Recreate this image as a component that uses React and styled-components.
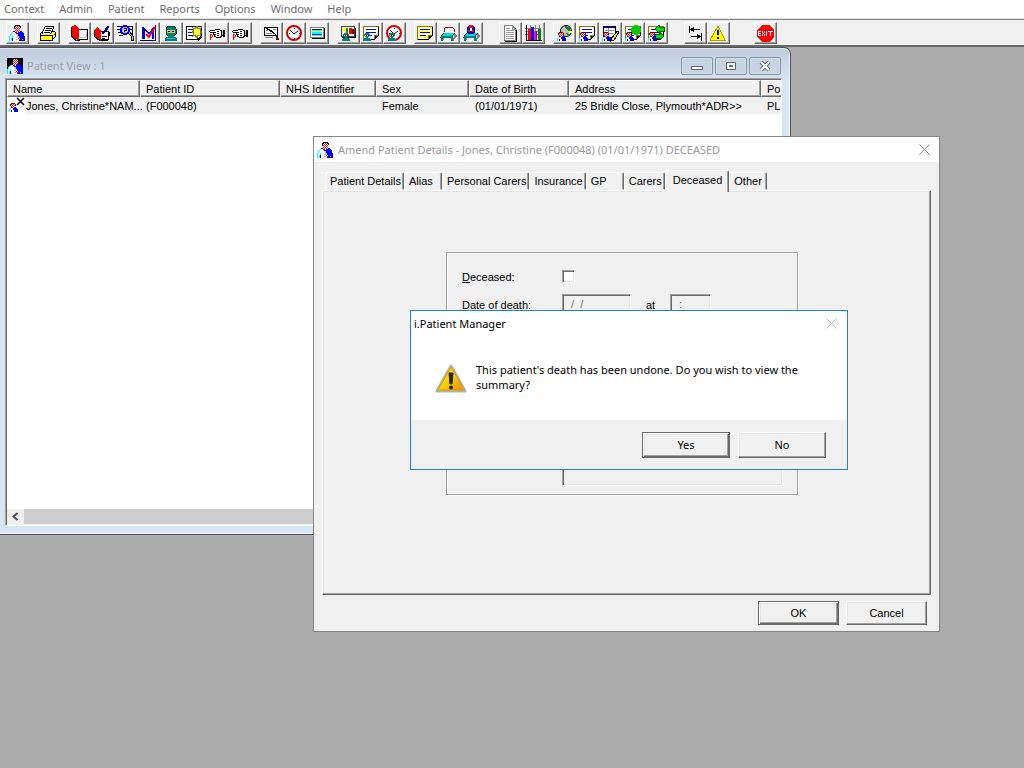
import React from 'react';
import styled, { createGlobalStyle, css } from 'styled-components';

const GlobalStyle = createGlobalStyle`
  * {
    box-sizing: border-box;
  }
  body {
    margin: 0;
    background: #ababab;
    color: #000;
    font: 11px/14px 'Liberation Sans', Arial, sans-serif;
  }
  button, input, textarea {
    font: inherit;
    color: inherit;
    margin: 0;
    border-radius: 0;
  }
`;

const uiFont = css`
  font-family: 'Noto Sans', 'Open Sans', sans-serif;
  font-size: 11px;
  line-height: 15px;
`;

const Screen = styled.div`
  min-height: 100vh;
  display: flex;
  flex-direction: column;
  overflow: hidden;
`;

const MenuBar = styled.nav`
  ${uiFont}
  display: flex;
  gap: 15px;
  height: 18px;
  padding: 0 4px 1px;
  background: #fff;
`;

const MenuItem = styled.button`
  border: 0;
  padding: 0;
  background: none;
  color: #6d6d6d;
`;

const Toolbar = styled.div`
  display: flex;
  height: 29px;
  padding: 3px 6px 0;
  background: #f0f0f0;
  border-top: 1px solid #e3e3e3;
  border-bottom: 2px solid #696969;
  box-shadow: inset 0 1px #808080;
`;

const ToolGroup = styled.div`
  display: flex;
  margin-right: ${(p) => p.$gap || 8}px;
`;

const ToolButton = styled.button`
  width: 23px;
  height: 22px;
  padding: 2px;
  background: #f0f0f0;
  border: 1px solid;
  border-color: #fff #696969 #696969 #fff;
  box-shadow: inset -1px -1px #a0a0a0;

  svg {
    display: block;
  }
`;

const Desktop = styled.main`
  position: relative;
  flex: 1;
`;

const ChildWindow = styled.section`
  position: absolute;
  left: 0;
  top: 0;
  width: 791px;
  padding: 7px 8px 8px 5px;
  background: linear-gradient(#bfcbda, #d7e4f2 32px);
  border: 1px solid #4e5257;
  border-left: 0;
  border-radius: 0 7px 0 0;
  box-shadow: inset 0 1px #e5edf5, inset -1px -1px #f0f6fc;
`;

const ChildTitleBar = styled.header`
  ${uiFont}
  display: flex;
  align-items: center;
  height: 23px;
  padding: 0 1px 2px 2px;
  color: #98a0aa;
`;

const ChildTitle = styled.h1`
  flex: 1;
  margin: 0 0 0 4px;
  font-size: 11px;
  font-weight: 400;
`;

const TitleIcon = styled.span`
  display: block;
  flex: none;
  width: 16px;
  height: 16px;
  background: ${(p) => (p.$dark ? '#000' : 'none')};

  svg {
    display: block;
  }
`;

const CaptionButton = styled.button`
  display: grid;
  place-items: center;
  width: 32px;
  height: 18px;
  margin-left: 2px;
  padding: 0;
  background: #c6d3e2;
  border: 1px solid #8593a7;
  border-radius: 2px;
  box-shadow: inset 0 0 0 1px #d5dfea;
`;

const ListFrame = styled.div`
  background: #fff;
  border: 1px solid;
  border-color: #a0a0a0 #fff #fff #a0a0a0;
  box-shadow: inset 1px 1px #696969;
  padding: 1px 0 0 1px;
`;

const ListBody = styled.div`
  height: 429px;
  overflow: hidden;
`;

const PatientTable = styled.table`
  width: 100%;
  table-layout: fixed;
  border-collapse: separate;
  border-spacing: 0;

  th, td {
    height: 17px;
    padding: 0 0 0 6px;
    text-align: left;
    font-weight: 400;
    white-space: nowrap;
    background: #f0f0f0;
  }
  th {
    border: 1px solid;
    border-color: #fff #696969 #696969 #fff;
    box-shadow: inset -1px -1px #a0a0a0;
    padding-left: 5px;
  }
  th:last-child {
    border-right: 0;
    box-shadow: inset 0 -1px #a0a0a0;
  }
  td:first-child {
    padding: 0;
  }
`;

const Col = styled.col`
  width: ${(p) => (p.$w ? `${p.$w}px` : 'auto')};
`;

const NameCell = styled.span`
  display: flex;
  align-items: center;
  background: linear-gradient(90deg, #fff 18px, #f0f0f0 18px);
  padding-left: 2px;

  svg {
    flex: none;
  }
`;

const ScrollBar = styled.div`
  display: flex;
  height: 16px;
  background: #cdcdcd;
  border-bottom: 1px solid #f0f0f0;
`;

const ScrollArrow = styled.button`
  width: 17px;
  padding: 0 0 0 4px;
  border: 0;
  background: #f0f0f0;

  svg {
    display: block;
  }
`;

const AmendDialog = styled.section`
  position: absolute;
  left: 313px;
  top: 89px;
  width: 627px;
  background: #f0f0f0;
  border: 1px solid #848484;
`;

const DialogTitleBar = styled.header`
  ${uiFont}
  display: flex;
  align-items: center;
  height: 25px;
  padding: 0 9px 0 3px;
  background: #fff;
  color: #999;
`;

const DialogTitle = styled.h2`
  flex: 1;
  margin: 0 0 0 5px;
  font-size: 11px;
  font-weight: 400;
`;

const CloseButton = styled.button`
  padding: 0;
  border: 0;
  background: none;
  color: ${(p) => p.$color};

  svg {
    display: block;
  }
`;

const TabArea = styled.div`
  padding: 9px 8px 0;
`;

const TabList = styled.div`
  display: flex;
  align-items: flex-end;
  height: 19px;
  padding-left: 3px;
`;

const Tab = styled.button`
  position: relative;
  min-width: 38px;
  height: 18px;
  padding: 0 2px 0 4px;
  text-align: left;
  white-space: nowrap;
  background: #f0f0f0;
  border: 1px solid;
  border-color: #fff #696969 transparent #fff;
  border-radius: 2px 2px 0 0;
  box-shadow: inset -1px 0 #a0a0a0;
  ${(p) =>
    p.$active &&
    css`
      z-index: 1;
      height: 22px;
      margin-bottom: -2px;
      padding: 0 6px 4px 7px;
      border-bottom: 0;
    `}
`;

const TabPage = styled.div`
  padding: 61px 132px 99px 123px;
  border: 1px solid;
  border-color: #fff #696969 #696969 #fff;
  box-shadow: inset -1px -1px #a0a0a0, inset 1px 1px #e3e3e3;
`;

const GroupBox = styled.div`
  padding: 15px 14px 8px 15px;
  border: 1px solid #a0a0a0;
  box-shadow: inset 1px 1px #fff, 1px 1px #fff;
`;

const FieldGrid = styled.div`
  display: grid;
  grid-template-columns: 100px 1fr;
  row-gap: 10px;
  align-items: center;

  label {
    padding-top: 2px;
  }
`;

const FieldRow = styled.div`
  display: flex;
  align-items: center;
`;

const sunken = css`
  border: 1px solid;
  border-color: #a0a0a0 #fff #fff #a0a0a0;
  box-shadow: inset 1px 1px #696969, inset -1px -1px #e3e3e3;
`;

const CheckBox = styled.input`
  appearance: none;
  width: 13px;
  height: 13px;
  background: #fff;
  ${sunken}
`;

const MaskedInput = styled.input`
  width: ${(p) => p.$w}px;
  height: 20px;
  padding: 0 8px;
  background: #f0f0f0;
  color: #6d6d6d;
  ${sunken}
`;

const AtLabel = styled.label`
  width: 39px;
  text-align: center;
`;

const Notes = styled.textarea`
  grid-column: 2;
  display: block;
  width: 100%;
  height: 162px;
  resize: none;
  background: #f0f0f0;
  ${sunken}
`;

const ButtonRow = styled.footer`
  display: flex;
  justify-content: flex-end;
  gap: ${(p) => p.$gap}px;
  padding: ${(p) => p.$pad};
`;

const PushButton = styled.button`
  width: ${(p) => p.$w}px;
  height: ${(p) => p.$h}px;
  padding: 0 0 1px;
  background: #f0f0f0;
  border: 1px solid;
  border-color: #fff #696969 #696969 #fff;
  box-shadow: inset -1px -1px #a0a0a0, inset 1px 1px #e3e3e3;
  ${(p) =>
    p.$default &&
    css`
      border-color: #696969;
      box-shadow: inset 1px 1px #fff, inset -1px -1px #696969,
        inset -2px -2px #a0a0a0, inset 2px 2px #e3e3e3;
    `}
`;

const MessageBox = styled.section`
  ${uiFont}
  position: absolute;
  left: 410px;
  top: 263px;
  width: 438px;
  background: #fff;
  border: 1px solid #1883d7;
`;

const MessageTitleBar = styled.header`
  display: flex;
  justify-content: space-between;
  align-items: center;
  height: 25px;
  padding: 0 10px 0 3px;
`;

const MessageTitle = styled.h2`
  margin: 0;
  font-size: 11px;
  font-weight: 400;
`;

const MessageBody = styled.div`
  display: flex;
  gap: 9px;
  height: 84px;
  padding: 26px 16px 0 24px;
`;

const MessageText = styled.p`
  margin: 0;
`;

const MessageFooter = styled.div`
  background: #f0f0f0;
`;

/* icon drawing */

const palette = {
  K: '#000', W: '#fff', R: '#f00', B: '#00f', N: '#000080',
  C: '#0ff', T: '#008080', Y: '#ff0', G: '#808080', L: '#c0c0c0',
  M: '#800000',
};

const Pixels = ({ rows, x = 0, y = 0 }) => (
  <g transform={`translate(${x} ${y})`}>
    {rows.flatMap((row, j) =>
      [...row].map((c, i) =>
        palette[c] ? (
          <rect key={`${i}-${j}`} x={i} y={j} width="1" height="1" fill={palette[c]} />
        ) : null
      )
    )}
  </g>
);

const Svg = ({ children, size = 17, ...rest }) => (
  <svg width={size} height={size} viewBox={`0 0 ${size} ${size}`} shapeRendering="crispEdges" fill="none" {...rest}>
    {children}
  </svg>
);

const doctorRows = [
  '......KKKKK.....',
  '.....KKWRWKK....',
  '.....KWRWRWK....',
  '.....KRWRWR.....',
  '......WRWRW.....',
  '......RWRWR.....',
  '....BBWRWR.BB...',
  '...CWWBRWBBBBB..',
  '..CWWWWBBBBBBBB.',
  '.CWWWWWLLBBBBBB.',
  '.CWWWWWWLBBBBBB.',
  'CWWCWWWWLLBBBBBB',
  'CWWCWWWLLWBBBBBB',
  'CWCBWWWWWRWBBBBB',
  'CWCBWWWLLWRBBWBB',
  'CWCBWWWWWWBBBBBB',
];

const smallDoctorRows = [
  '..MMMM...',
  '.MRWRWM..',
  '.MWRWRM..',
  '..RWRW...',
  '..BRWBB..',
  '.CWWBBBB.',
  'CWWWBBBBB',
  'CWBWWBBBB',
  'CWBWWBBBB',
];

const surgeonRows = [
  '..TTTT..',
  '.TTTTTT.',
  '.TYKYKT.',
  '..TTTT..',
  '...TT...',
  '.TTTTTT.',
  'TTTTTTTT',
  'TTTTTTTT',
];

// pointing hand with a red mark under the finger
const handRows = [
  '......KKKKK.....',
  '.KKKKKWWWWWKK.KK',
  'KWWWWWWWKKWWKLKK',
  '.KKKKKKWWWWWKLKK',
  '....KWWWKKWWKLKK',
  '.RR.KKKWWWWWKLKK',
  '.R.R.KWWKKWWKKKK',
  '.R.R.KKWWWWKK.KK',
  '.RR....KKKKK....',
  '.R..............',
  '.R..............',
];

const printerRows = [
  '.....KKKKKKKKK..',
  '....KWWWWWWWWK..',
  '....KWKKKKKKWK..',
  '...KWWWWWWWWK...',
  '...KWKKKKKKWK...',
  '..KWWWWWWWWKKKK.',
  '.KKWKKKKKKWKYYYK',
  'KYKWWWWWWWKYYYYK',
  'KYYYYYYYYYYYYYKK',
  'KKKKKKKKKKKKKYYK',
  'KYYYYYYYYYYYKYYK',
  'KYYWYWYWYWYYKYK.',
  'KYYYYYYYYYYYKK..',
  'KYYYYYYYYYYYK...',
  'KKKKKKKKKKKKK...',
];

const clock = (
  <>
    <circle cx="8" cy="8" r="7" fill="#fff" stroke="#d00000" strokeWidth="2" shapeRendering="auto" />
    <path d="M8 2.500v1M8 12.500v1M2.500 8h1M12.500 8h1" stroke="#000" />
    <path d="M4 5l4 4l4-3" stroke="#000" shapeRendering="auto" />
  </>
);

const sheet = (fill) => (
  <>
    <path d="M1 1h15v9l-5 5h-10z" fill="#000" />
    <path d="M1 1h14v9h-4v4h-10z" fill={fill} />
    <path d="M.5 14.500v-13.500h15M11.500 14v-3.500h3" stroke="#808000" />
    <path d="M3 4.500h10M3 7.500h10M3 10.500h6" stroke="#00f" />
  </>
);

const bed = (
  <>
    <path d="M4 12l-2 4M14 9l2 2l-4 5" stroke="#808080" strokeWidth="2" />
    <path d="M3 8h12l-3 5h-12z" fill="#000" />
    <path d="M4 8h10l-2 3h-11z" fill="#00e0e0" />
    <path d="M1 12h12M2 13v3M12 13v3" stroke="#008080" strokeWidth="2" />
  </>
);

const icons = {
  doctor: <Pixels rows={doctorRows} />,
  printer: <Pixels rows={printerRows} y={1} />,
  redBook: (
    <>
      <path d="M7 4h9v10h-9z" fill="#fff" stroke="#000" />
      <path d="M9 12h6v-6" stroke="#c0c0c0" />
      <path d="M0 2l4-2l4 4v11l-4-1l-4-3z" fill="#f00" />
      <path d="M.5 2v9l4 4l4 1M8 14.500h9" stroke="#000" />
    </>
  ),
  editBook: (
    <>
      <path d="M6 6h9l-1 8h-9z" fill="#fff" stroke="#000" />
      <path d="M5 15.500h9l2-8" stroke="#000" />
      <path d="M0 5l4-3l3 4v9l-3-1l-4-3z" fill="#f00" />
      <path d="M.5 5v6l4 4M8 11.500h5M8 13.500h3" stroke="#000" />
      <path d="M8 9l2-3l4-5l1 1l-4 5z" fill="#00f" stroke="#000080" />
    </>
  ),
  search: (
    <>
      <path d="M0 1.500h5M0 4.500h4M1 7.500h3M2 10.500h4M10 1.500h6M13 4.500h2M15.500 1v9" stroke="#000" />
      <circle cx="8" cy="5" r="4" fill="#c0c0ff" stroke="#00f" strokeWidth="2" />
      <path d="M7 3h2v2h-2v2" stroke="#000080" />
      <path d="M11 8l3 3v4h2v-4l-3-4" fill="#c0c0c0" stroke="#000" />
    </>
  ),
  mail: (
    <>
      <path d="M0 0h16v16h-16z" fill="#fff" />
      <path d="M2 2h2l5 6l4-6h1v12h-2v-8l-3 4l-4-4v8h-3z" fill="#00f" />
      <path d="M0 15.500h16M15.500 0v16" stroke="#000080" />
      <path d="M6 9l3 3l6-10" stroke="#f00" strokeWidth="2" shapeRendering="auto" />
    </>
  ),
  surgeon: (
    <>
      <path d="M5 1h6l2 3v5l-3 3h-4l-3-3v-5z" fill="#008080" stroke="#004040" />
      <path d="M4 5h8v3h-8z" fill="#f0c040" />
      <path d="M5 6h2v1h-2zM9 6h2v1h-2z" fill="#000" />
      <path d="M4 8h8l-1 3h-6z" fill="#008080" />
      <path d="M2 16v-3l4-2h4l4 2v3z" fill="#008080" />
      <path d="M4 13.500h8" stroke="#0cc" />
    </>
  ),
  newNote: (
    <>
      <path d="M.5 1.500h15v9l-4 4h-11z" fill="#fff" stroke="#000" />
      <path d="M12 15.500l4-4M11.500 14v-3.500h4" stroke="#000" />
      <path d="M2 4.500h6M2 7.500h5M2 10.500h6" stroke="#00f" />
      <path d="M7 3l2 1l2-3l1 3l3-1l-1 3l2 1l-2 1l1 3l-3-1l-1 3l-2-3l-2 1l1-3l-2-1l2-1z" fill="#ff0" stroke="#808000" />
      <path d="M9 5h5v4h-5z" fill="#ff0" />
      <path d="M10 6h3v2h-3z" fill="#fff" />
    </>
  ),
  hand: <Pixels rows={handRows} y={4} />,
  penNote: (
    <>
      <path d="M1.500 2.500h13v8h-13z" fill="#fff" stroke="#000" />
      <path d="M3 5.500h2M3 8.500h6M2 12.500h8M10 4.500h3" stroke="#808080" />
      <path d="M3 3l9 6l3 6M6 4l7 6" stroke="#000" />
      <path d="M12 10h3l1 5h-2z" fill="#000" />
      <path d="M13 13h3v2h-3z" fill="#800000" />
    </>
  ),
  clock,
  monitor: (
    <>
      <path d="M3 3h13v11h-13z" fill="#000" />
      <path d="M1 2h14v11h-14z" fill="#fff" />
      <path d="M1.500 2.500h13v10h-13z" stroke="#808080" />
      <path d="M3 4h10v7h-10z" fill="#0ff" />
      <path d="M3 4.500h10M3 9.500h10" stroke="#00f" />
      <path d="M3 6.500h10" stroke="#ff0" />
    </>
  ),
  surgeonChart: (
    <>
      <path d="M2 3h14v10h-14z" fill="#000" />
      <path d="M1.500 1.500h13v10h-13z" fill="#fff" stroke="#404040" />
      <path d="M3 3h3v3h-3z" fill="#ff0" />
      <path d="M6 3h2v6h-2z" fill="#00a000" />
      <path d="M9 3h3v6h-3z" fill="#f00" />
      <path d="M12 4h2v5h-2z" fill="#800000" />
      <Pixels rows={surgeonRows} x={2} y={8} />
    </>
  ),
  surgeonNote: (
    <>
      {sheet('#fff')}
      <Pixels rows={surgeonRows} y={8} />
    </>
  ),
  surgeonClock: (
    <>
      {clock}
      <Pixels rows={surgeonRows} x={2} y={8} />
    </>
  ),
  yellowNote: sheet('#ffff80'),
  bed: (
    <>
      {bed}
      <path d="M4 7v-3l2-2h6l2 2v3" fill="#fff" stroke="#a00000" />
    </>
  ),
  patientBed: (
    <>
      {bed}
      <circle cx="8" cy="5" r="4" fill="#00f" stroke="#000080" />
      <path d="M6 0h4v3h-4zM5 5h2v2h-2zM9 5h2v2h-2z" fill="#f00" />
      <path d="M7 3h2v3h-2z" fill="#fff" />
    </>
  ),
  page: (
    <>
      <path d="M3 1h8l4 4v12h-12z" fill="#000" />
      <path d="M2.500 .5h8l3 4v11h-11z" fill="#fff" stroke="#808080" />
      <path d="M10.500 .5v4h4M4 3.500h4M4 5.500h8M4 7.500h8M4 9.500h8M4 11.500h8M4 13.500h8" stroke="#a0a0a0" />
    </>
  ),
  barChart: (
    <>
      <path d="M0 3.500h16M0 6.500h16M0 9.500h16M5.500 0v15M10.500 0v15M14.500 0v15" stroke="#808080" />
      <path d="M3 4h3v11h-3z" fill="#f00" />
      <path d="M6 2h3v13h-3z" fill="#00f" />
      <path d="M9 6h3v9h-3z" fill="#f0f" />
      <path d="M11 6h1v9h-1z" fill="#800080" />
      <path d="M13 4h3v11h-3z" fill="#008000" />
      <path d="M1.500 0v15h15" stroke="#000" />
    </>
  ),
  doctorWorld: (
    <>
      <circle cx="10" cy="6" r="5.500" fill="#c0c0c0" stroke="#000" shapeRendering="auto" />
      <path d="M9 1l4 1l2 4l-2 1l-3-3zM10 8l4 1l-2 2z" fill="#008040" />
      <path d="M11 6h5v2h-3z" fill="#ff0" />
      <Pixels rows={smallDoctorRows} x={1} y={7} />
    </>
  ),
  doctorNote: (
    <>
      {sheet('#fff')}
      <Pixels rows={smallDoctorRows} y={7} />
    </>
  ),
  doctorEdit: (
    <>
      <path d="M1 1h12v11h-12z" fill="#fff" stroke="#000" />
      <path d="M1 1h12v2h-12z" fill="#000080" />
      <path d="M3 5.500h9M3 8.500h9M6.500 3v8" stroke="#909090" />
      <Pixels rows={smallDoctorRows} y={7} />
      <path d="M10 13l5-7l2 1l-5 8l-3 1z" fill="#ff0" stroke="#000" />
    </>
  ),
  doctorGreen: (
    <>
      {sheet('#fff')}
      <circle cx="11" cy="5" r="5" fill="#00d000" />
      <path d="M8 3h1v1h-1zM11 2h1v1h-1zM13 5h1v1h-1zM10 6h1v1h-1z" fill="#008000" />
      <Pixels rows={smallDoctorRows} y={7} />
    </>
  ),
  doctorTransfer: (
    <>
      {sheet('#fff')}
      <path d="M7 4l4-4v2h5v4h-5v2z" fill="#00e000" stroke="#006000" />
      <path d="M16 11l-4-4v2h-5v4h5v2z" fill="#00e000" stroke="#006000" />
      <Pixels rows={smallDoctorRows} y={7} />
    </>
  ),
  arrows: (
    <>
      <path d="M2.500 1v7M14.500 8v8M4 4.500h9M4 11.500h9" stroke="#000" />
      <path d="M3 4.500l4-3v6zM14 11.500l-4-3v6z" fill="#000" />
    </>
  ),
  warning: (
    <>
      <path d="M9 2l7 14h-14z" fill="#000" />
      <path d="M8 1l7 14h-15z" fill="#ff0" stroke="#a0a000" />
      <path d="M7 5h2v5h-2zM7 12h2v2h-2z" fill="#000" />
    </>
  ),
  exit: (
    <>
      <path d="M5 0h7l5 5v7l-5 5h-7l-5-5v-7z" fill="#f00" />
      <path d="M4 6.500h-3M4 8.500h-3M4 10.500h-3M1.500 6v5M5.500 6v2M7.500 6v2M6 8.500h1M5.500 9v2M7.500 9v2M9.500 6v5M11 6.500h5M13.500 6v5" stroke="#fff" />
    </>
  ),
};

const WarningIcon = () => (
  <svg width="32" height="32" viewBox="0 0 32 32" aria-hidden="true">
    <defs>
      <linearGradient id="amber" x1="0" y1="0" x2="1" y2="1">
        <stop offset="0" stopColor="#ffe600" />
        <stop offset="0.5" stopColor="#fdd000" />
        <stop offset="1" stopColor="#e88a00" />
      </linearGradient>
    </defs>
    <path d="M16 4L30 29H2z" fill="#c8c8c8" stroke="#b0b0b0" strokeWidth="3" strokeLinejoin="round" />
    <path d="M16 5L29 28H3z" fill="url(#amber)" stroke="#d8a400" />
    <path d="M14 11h4l-1 11h-2z" fill="#26262e" stroke="#26262e" />
    <circle cx="16" cy="25.500" r="2" fill="#26262e" />
  </svg>
);

const CloseGlyph = ({ size = 11 }) => (
  <svg width={size} height={size} viewBox="0 0 11 11" aria-hidden="true">
    <path d="M.5 .5l10 10M10.500 .5l-10 10" stroke="currentColor" />
  </svg>
);

const menus = ['Context', 'Admin', 'Patient', 'Reports', 'Options', 'Window', 'Help'];

const toolGroups = [
  { items: ['doctor'] },
  { items: ['printer'] },
  { items: ['redBook', 'editBook', 'search', 'mail', 'surgeon', 'newNote', 'hand', 'hand'] },
  { items: ['penNote', 'clock', 'monitor'] },
  { items: ['surgeonChart', 'surgeonNote', 'surgeonClock'] },
  { items: ['yellowNote', 'bed', 'patientBed'], gap: 16 },
  { items: ['page', 'barChart'] },
  { items: ['doctorWorld', 'doctorNote', 'doctorEdit', 'doctorGreen', 'doctorTransfer'], gap: 16 },
  { items: ['arrows', 'warning'], gap: 24 },
  { items: ['exit'] },
];

const columns = [
  { label: 'Name', width: 133 },
  { label: 'Patient ID', width: 140 },
  { label: 'NHS Identifier', width: 96 },
  { label: 'Sex', width: 93 },
  { label: 'Date of Birth', width: 100 },
  { label: 'Address', width: 192 },
  { label: 'Po' },
];

const tabs = ['Patient Details', 'Alias', 'Personal Carers', 'Insurance', 'GP', 'Carers', 'Deceased', 'Other'];

const PatientView = () => (
  <ChildWindow>
    <ChildTitleBar>
      <TitleIcon $dark>
        <Svg size={16}>{icons.doctor}</Svg>
      </TitleIcon>
      <ChildTitle>Patient View : 1</ChildTitle>
      <CaptionButton aria-label="Minimize">
        <svg width="12" height="10" viewBox="0 0 12 10">
          <path d="M.5 5.500h11v3h-11z" fill="#fff" stroke="#5c6470" />
        </svg>
      </CaptionButton>
      <CaptionButton aria-label="Restore">
        <svg width="12" height="10" viewBox="0 0 12 10">
          <path d="M1.500 1.500h9v7h-9z" fill="#fff" stroke="#5c6470" />
          <path d="M4.500 4.500h3v1h-3z" stroke="#5c6470" />
        </svg>
      </CaptionButton>
      <CaptionButton aria-label="Close">
        <svg width="12" height="10" viewBox="0 0 12 10">
          <path d="M2 1l8 8M10 1l-8 8" stroke="#5c6470" strokeWidth="4" />
          <path d="M2 1l8 8M10 1l-8 8" stroke="#fff" strokeWidth="2" />
        </svg>
      </CaptionButton>
    </ChildTitleBar>
    <ListFrame>
      <ListBody>
        <PatientTable>
          <colgroup>
            {columns.map((c) => (
              <Col key={c.label} $w={c.width} />
            ))}
          </colgroup>
          <thead>
            <tr>
              {columns.map((c) => (
                <th key={c.label}>{c.label}</th>
              ))}
            </tr>
          </thead>
          <tbody>
            <tr>
              <td>
                <NameCell>
                  <Svg>
                    <Pixels rows={smallDoctorRows} y={6} />
                    <path d="M8 1l7 7M15 1l-7 7" stroke="#000" strokeWidth="1.500" shapeRendering="auto" />
                  </Svg>
                  Jones, Christine*NAM...
                </NameCell>
              </td>
              <td>(F000048)</td>
              <td />
              <td>Female</td>
              <td>(01/01/1971)</td>
              <td>25 Bridle Close, Plymouth*ADR&gt;&gt;</td>
              <td>PL</td>
            </tr>
          </tbody>
        </PatientTable>
      </ListBody>
      <ScrollBar>
        <ScrollArrow aria-label="Scroll left">
          <svg width="8" height="9" viewBox="0 0 8 9">
            <path d="M6.500 1l-4 3.500l4 3.500" fill="none" stroke="#505050" strokeWidth="2" />
          </svg>
        </ScrollArrow>
      </ScrollBar>
    </ListFrame>
  </ChildWindow>
);

const AmendDetails = () => (
  <AmendDialog>
    <DialogTitleBar>
      <TitleIcon>
        <Svg size={16}>{icons.doctor}</Svg>
      </TitleIcon>
      <DialogTitle>Amend Patient Details - Jones, Christine (F000048) (01/01/1971) DECEASED</DialogTitle>
      <CloseButton $color="#888" aria-label="Close">
        <CloseGlyph />
      </CloseButton>
    </DialogTitleBar>
    <TabArea>
      <TabList role="tablist">
        {tabs.map((tab) => (
          <Tab key={tab} role="tab" aria-selected={tab === 'Deceased'} $active={tab === 'Deceased'}>
            {tab}
          </Tab>
        ))}
      </TabList>
      <TabPage>
        <GroupBox>
          <FieldGrid>
            <label htmlFor="deceased">
              <u>D</u>eceased:
            </label>
            <FieldRow>
              <CheckBox type="checkbox" id="deceased" />
            </FieldRow>
            <label htmlFor="death-date">Date of death:</label>
            <FieldRow>
              <MaskedInput id="death-date" $w={69} defaultValue="/  /" />
              <AtLabel htmlFor="death-time">at</AtLabel>
              <MaskedInput id="death-time" $w={41} defaultValue=":" />
            </FieldRow>
            <Notes aria-label="Notes" />
          </FieldGrid>
        </GroupBox>
      </TabPage>
    </TabArea>
    <ButtonRow $gap={7} $pad="6px 12px 6px">
      <PushButton $w={81} $h={24} $default>OK</PushButton>
      <PushButton $w={81} $h={24}>Cancel</PushButton>
    </ButtonRow>
  </AmendDialog>
);

const UndoneMessage = () => (
  <MessageBox role="alertdialog" aria-labelledby="message-title">
    <MessageTitleBar>
      <MessageTitle id="message-title">i.Patient Manager</MessageTitle>
      <CloseButton $color="#c0c0c0" aria-label="Close">
        <CloseGlyph />
      </CloseButton>
    </MessageTitleBar>
    <MessageBody>
      <WarningIcon />
      <MessageText>
        This patient's death has been undone. Do you wish to view the
        <br />
        summary?
      </MessageText>
    </MessageBody>
    <MessageFooter>
      <ButtonRow $gap={8} $pad="12px 21px 11px">
        <PushButton $w={88} $h={26} $default>Yes</PushButton>
        <PushButton $w={88} $h={26}>No</PushButton>
      </ButtonRow>
    </MessageFooter>
  </MessageBox>
);

const App = () => {
  return (
    <Screen>
      <GlobalStyle />
      <MenuBar>
        {menus.map((m) => (
          <MenuItem key={m}>{m}</MenuItem>
        ))}
      </MenuBar>
      <Toolbar>
        {toolGroups.map((group, g) => (
          <ToolGroup key={g} $gap={group.gap}>
            {group.items.map((name, i) => (
              <ToolButton key={i} aria-label={name}>
                <Svg>{icons[name]}</Svg>
              </ToolButton>
            ))}
          </ToolGroup>
        ))}
      </Toolbar>
      <Desktop>
        <PatientView />
        <AmendDetails />
        <UndoneMessage />
      </Desktop>
    </Screen>
  );
};

export default App;
